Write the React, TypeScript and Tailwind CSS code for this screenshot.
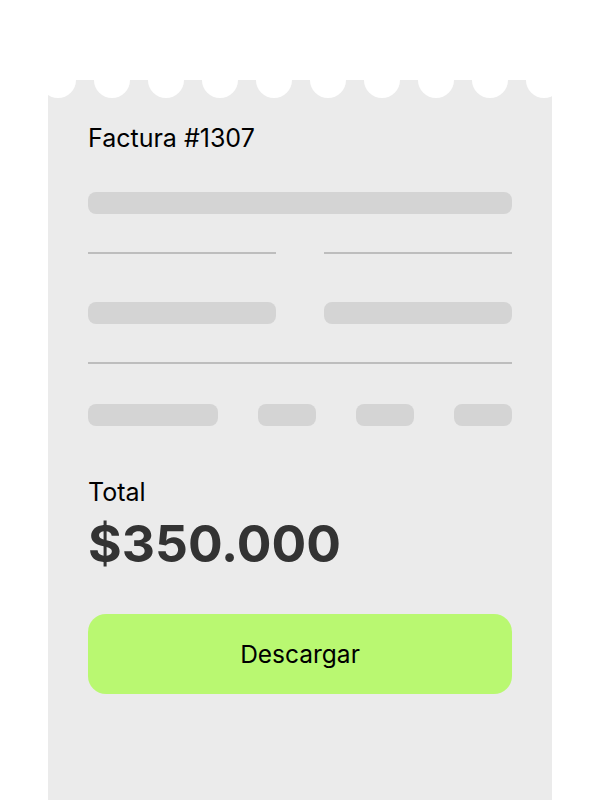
export default function App() {
  const scallops = Array.from({ length: 10 });
  return (
    <div className="min-h-[800px] w-[600px] bg-white pt-[80px] font-['Inter',sans-serif]">
      <div className="relative ml-[48px] min-h-[720px] w-[504px] bg-[#ebebeb] px-[40px] pt-[42px]">
        {/* torn top edge */}
        <div className="absolute left-[-8px] top-[-18px] flex gap-[18px]">
          {scallops.map((_, i) => (
            <div key={i} className="h-[36px] w-[36px] shrink-0 rounded-full bg-white" />
          ))}
        </div>

        <h1 className="text-[25px] leading-[32px] text-black">Factura #1307</h1>

        <div className="mt-[38px] h-[22px] w-full rounded-[8px] bg-[#d4d4d4]" />

        <div className="mt-[38px] flex justify-between">
          <div className="h-[2px] w-[188px] bg-[#bdbdbd]" />
          <div className="h-[2px] w-[188px] bg-[#bdbdbd]" />
        </div>

        <div className="mt-[48px] flex justify-between">
          <div className="h-[22px] w-[188px] rounded-[8px] bg-[#d4d4d4]" />
          <div className="h-[22px] w-[188px] rounded-[8px] bg-[#d4d4d4]" />
        </div>

        <div className="mt-[38px] h-[2px] w-full bg-[#bdbdbd]" />

        <div className="mt-[40px] flex justify-between">
          <div className="h-[22px] w-[130px] rounded-[8px] bg-[#d4d4d4]" />
          <div className="h-[22px] w-[58px] rounded-[8px] bg-[#d4d4d4]" />
          <div className="h-[22px] w-[58px] rounded-[8px] bg-[#d4d4d4]" />
          <div className="h-[22px] w-[58px] rounded-[8px] bg-[#d4d4d4]" />
        </div>

        <p className="mt-[50px] text-[25px] leading-[32px] text-black">Total</p>
        <p className="mt-[9px] text-[51.5px] font-bold leading-[52px] text-[#333333]">$350.000</p>

        <button className="mt-[45px] flex h-[80px] w-full items-center justify-center rounded-[18px] bg-[#b9f871] text-[24.5px] text-black">
          Descargar
        </button>
      </div>
    </div>
  );
}
